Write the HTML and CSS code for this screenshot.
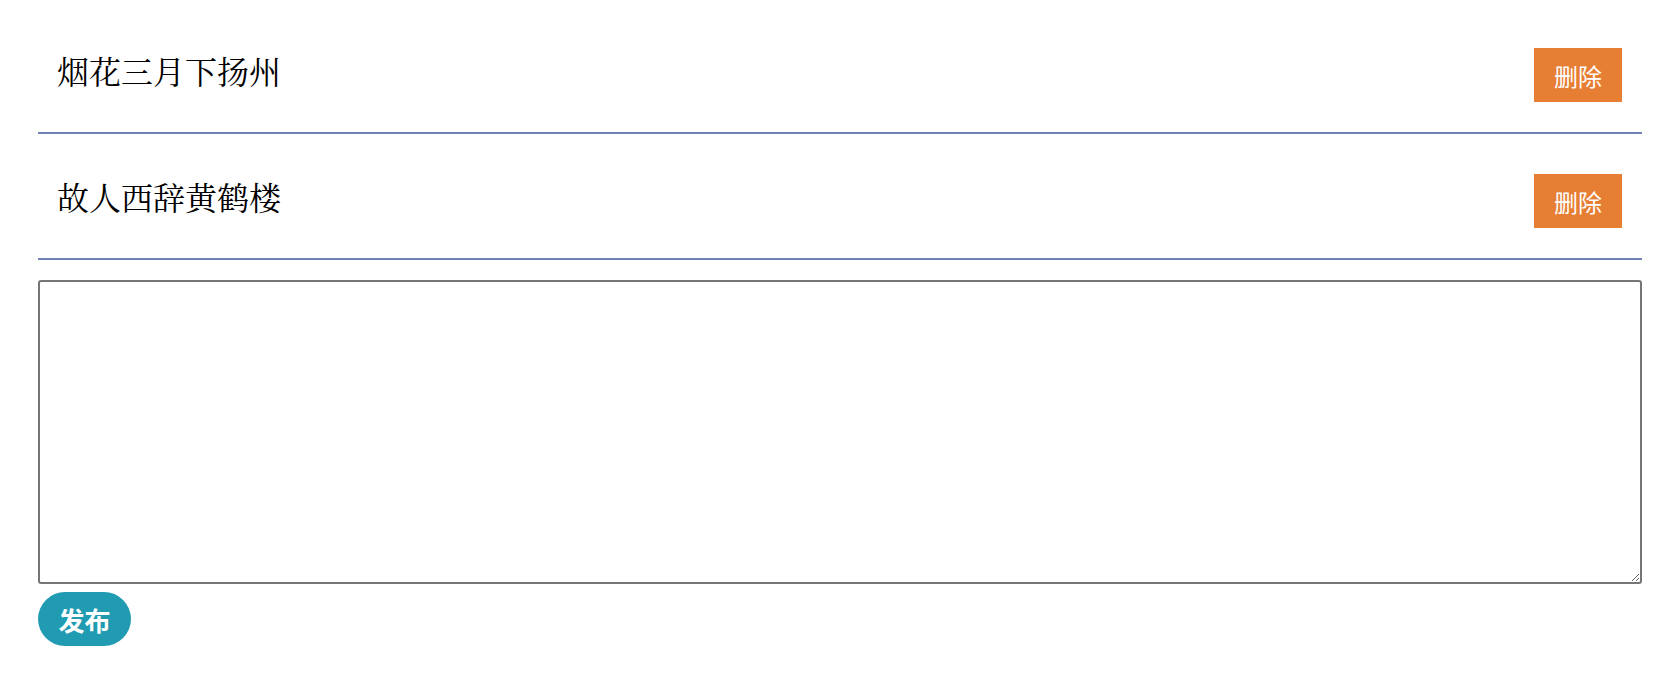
FILE: index.html
```html
<!DOCTYPE html>
<html lang="zh-CN">
<head>
    <meta charset="UTF-8">
    <meta name="viewport" content="width=device-width, initial-scale=1.0">
    <title>留言板</title>
    <link rel="stylesheet" href="styles.css">
</head>
<body>
    <div class="board">
        <ul class="list">
            <li class="item">
                <span class="item-text">烟花三月下扬州</span>
                <button class="btn-del">删除</button>
            </li>
            <li class="item">
                <span class="item-text">故人西辞黄鹤楼</span>
                <button class="btn-del">删除</button>
            </li>
        </ul>
        <textarea class="editor"></textarea>
        <button class="btn-pub">发布</button>
    </div>
</body>
</html>
```

FILE: styles.css
```css
body {
    margin: 8px;
    font-family: "Noto Serif CJK SC", "Noto Sans CJK SC", serif;
}
.board {
    margin: 0 28px 0 30px;
}
.list {
    list-style: none;
    margin: 0;
    padding: 0;
}
.item {
    display: flex;
    justify-content: space-between;
    align-items: flex-start;
    padding: 40px 20px 30px 19px;
    border-bottom: 2px solid rgb(110,130,181);
}
.item-text {
    font-size: 32px;
    line-height: 44px;
    color: black;
}
.btn-del {
    width: 88px;
    height: 54px;
    border: none;
    background-color: rgb(230,126,52);
    color: white;
    font-family: "Noto Sans CJK SC", sans-serif;
    font-size: 24px;
    padding: 0;
}
.editor {
    display: block;
    box-sizing: border-box;
    width: 100%;
    height: 304px;
    margin: 20px 0 0 0;
    border: 2px solid rgb(118,118,118);
    border-radius: 3px;
}
.btn-pub {
    display: block;
    margin-top: 8px;
    width: 93px;
    height: 54px;
    padding: 0;
    border: none;
    border-radius: 27px;
    background-color: rgb(32,155,178);
    color: white;
    font-family: "Noto Sans CJK SC", sans-serif;
    font-weight: bold;
    font-size: 26px;
}
```
